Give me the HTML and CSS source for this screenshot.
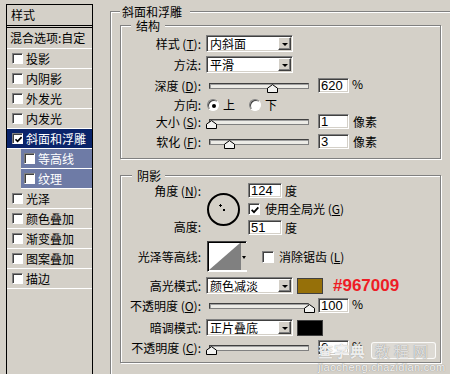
FILE: index.html
```html
<!DOCTYPE html>
<html lang="zh-CN">
<head>
<meta charset="utf-8">
<title>图层样式 - 斜面和浮雕</title>
<link rel="stylesheet" href="styles.css">
</head>
<body>
<div class="dialog">
  <div class="styles-list">
    <div class="sl-head">样式</div>
    <div class="sl-blend">混合选项:自定</div>
    <div class="sl-item"><span class="cb"></span>投影</div>
    <div class="sl-item"><span class="cb"></span>内阴影</div>
    <div class="sl-item"><span class="cb"></span>外发光</div>
    <div class="sl-item"><span class="cb"></span>内发光</div>
    <div class="sl-item selected"><span class="cb"><svg width="7" height="7" viewBox="0 0 7 7"><path d="M0.5 3.3 L2.6 5.4 L6.6 1.2" fill="none" stroke="#000" stroke-width="1.7"/></svg></span>斜面和浮雕</div>
    <div class="sl-item sub"><span class="cb"></span>等高线</div>
    <div class="sl-item sub"><span class="cb"></span>纹理</div>
    <div class="sl-item"><span class="cb"></span>光泽</div>
    <div class="sl-item"><span class="cb"></span>颜色叠加</div>
    <div class="sl-item"><span class="cb"></span>渐变叠加</div>
    <div class="sl-item"><span class="cb"></span>图案叠加</div>
    <div class="sl-item"><span class="cb"></span>描边</div>
  </div>

  <fieldset class="group outer">
    <legend class="lg-outer">斜面和浮雕</legend>

    <fieldset class="group inner struct">
      <legend class="lg-struct">结构</legend>
      <div class="row h17 mt2">
        <label class="lbl">样式 (<u>T</u>):</label>
        <div class="select"><span class="sel-text">内斜面</span><span class="sel-btn"><i class="arrow"></i></span></div>
      </div>
      <div class="row h17 mt4">
        <label class="lbl">方法:</label>
        <div class="select"><span class="sel-text">平滑</span><span class="sel-btn"><i class="arrow"></i></span></div>
      </div>
      <div class="row h15 mt5">
        <label class="lbl">深度 (<u>D</u>):</label>
        <div class="slider"><div class="track"></div><svg class="thumb" style="left:61px" width="11" height="9" viewBox="0 0 11 9"><path d="M0.5 8.5 V4.2 L5.5 0.6 L10.5 4.2 V8.5 Z" fill="#f2f2f0" stroke="#000"/></svg></div>
        <span class="num">620</span><span class="unit pct">%</span>
      </div>
      <div class="row h14 mt5">
        <label class="lbl">方向:</label>
        <span class="radio on"></span><span class="r-txt">上</span>
        <span class="radio second"></span><span class="r-txt">下</span>
      </div>
      <div class="row h15 mt2">
        <label class="lbl">大小 (<u>S</u>):</label>
        <div class="slider"><div class="track"></div><svg class="thumb" style="left:0px" width="11" height="9" viewBox="0 0 11 9"><path d="M0.5 8.5 V4.2 L5.5 0.6 L10.5 4.2 V8.5 Z" fill="#f2f2f0" stroke="#000"/></svg></div>
        <span class="num">1</span><span class="unit">像素</span>
      </div>
      <div class="row h15 mt5">
        <label class="lbl">软化 (<u>F</u>):</label>
        <div class="slider"><div class="track"></div><svg class="thumb" style="left:18px" width="11" height="9" viewBox="0 0 11 9"><path d="M0.5 8.5 V4.2 L5.5 0.6 L10.5 4.2 V8.5 Z" fill="#f2f2f0" stroke="#000"/></svg></div>
        <span class="num">3</span><span class="unit">像素</span>
      </div>
    </fieldset>

    <fieldset class="group inner shadow">
      <legend class="lg-shadow">阴影</legend>
      <div class="angle">
        <label class="lbl a-l1">角度 (<u>N</u>):</label>
        <div class="dial">
          <svg width="33" height="33" viewBox="0 0 33 33">
            <circle cx="16.5" cy="16.5" r="15.5" fill="none" stroke="#000" stroke-width="2"/>
            <path d="M13.5 11 V14 M12 12.5 H15" stroke="#000" stroke-width="1"/>
            <rect x="16" y="16" width="2" height="2" fill="#000"/>
          </svg>
        </div>
        <div class="a-r1"><span class="num wide">124</span><span class="unit deg">度</span></div>
        <div class="a-r2"><span class="cb big"><svg width="8" height="8" viewBox="0 0 8 8"><path d="M0.6 3.8 L3 6.2 L7.4 1.4" fill="none" stroke="#000" stroke-width="1.8"/></svg></span><span class="cb-txt">使用全局光 (<u>G</u>)</span></div>
        <label class="lbl a-l3">高度:</label>
        <div class="a-r3"><span class="num wide">51</span><span class="unit deg">度</span></div>
      </div>

      <div class="row h31 mt6">
        <label class="lbl">光泽等高线:</label>
        <div class="contour">
          <svg class="c-prev" width="31" height="27" viewBox="0 0 31 27"><rect width="31" height="27" fill="#fff"/><polygon points="0,27 31,0 31,27" fill="#808080"/></svg>
          <span class="c-btn"><i class="arrow"></i></span>
        </div>
        <span class="cb big aa"></span><span class="cb-txt">消除锯齿 (<u>L</u>)</span>
      </div>

      <div class="row h17 mt5">
        <label class="lbl">高光模式:</label>
        <div class="select"><span class="sel-text">颜色减淡</span><span class="sel-btn"><i class="arrow"></i></span></div>
        <span class="swatch gold"></span>
        <span class="hex">#967009</span>
      </div>
      <div class="row h15 mt4">
        <label class="lbl">不透明度 (<u>O</u>):</label>
        <div class="slider"><div class="track"></div><svg class="thumb" style="left:98px" width="11" height="9" viewBox="0 0 11 9"><path d="M0.5 8.5 V4.2 L5.5 0.6 L10.5 4.2 V8.5 Z" fill="#f2f2f0" stroke="#000"/></svg></div>
        <span class="num">100</span><span class="unit pct">%</span>
      </div>
      <div class="row h17 mt6">
        <label class="lbl">暗调模式:</label>
        <div class="select"><span class="sel-text">正片叠底</span><span class="sel-btn"><i class="arrow"></i></span></div>
        <span class="swatch black"></span>
      </div>
      <div class="row h15 mt4">
        <label class="lbl">不透明度 (<u>C</u>):</label>
        <div class="slider"><div class="track"></div><svg class="thumb" style="left:0px" width="11" height="9" viewBox="0 0 11 9"><path d="M0.5 8.5 V4.2 L5.5 0.6 L10.5 4.2 V8.5 Z" fill="#f2f2f0" stroke="#000"/></svg></div>
        <span class="num">0</span><span class="unit pct">%</span>
      </div>
    </fieldset>
  </fieldset>

  <div class="watermark">
    <div class="wm-top"><span class="wm-logo">查字典</span><span class="wm-box">教程网</span></div>
    <div class="wm-url">jiaocheng.chazidian.com</div>
  </div>
</div>
</body>
</html>
```

FILE: styles.css
```css
* { box-sizing: border-box; }
html, body { margin: 0; padding: 0; }
body {
  width: 450px;
  height: 374px;
  overflow: hidden;
  background: #d4d0c8;
  color: #000;
  font: 12px/14px "Noto Sans CJK SC", "Liberation Sans", sans-serif;
}
u { text-decoration: underline; text-underline-offset: 1px; }

.dialog {
  position: relative;
  display: flex;
  align-items: flex-start;
  height: 374px;
}

/* ---------- left styles list ---------- */
.styles-list {
  flex: none;
  margin: 4px 0 0 6px;
  width: 87px;
  height: 390px;
  border: 1px solid #000;
}
.sl-head {
  height: 23px;
  line-height: 20px;
  padding-left: 4px;
  border-bottom: 3px double #000;
}
.sl-blend {
  height: 21px;
  line-height: 20px;
  padding-left: 3px;
  border-bottom: 1px solid #fff;
}
.sl-item {
  height: 20px;
  display: flex;
  align-items: center;
  gap: 3px;
  padding-left: 5px;
  border-bottom: 1px solid #fff;
  white-space: nowrap;
}
.sl-item.selected {
  background: #0a246a;
  color: #fff;
}
.sl-item.sub {
  margin-left: 14px;
  padding-left: 3px;
  background: #6e7ba6;
  color: #fff;
}

.cb {
  flex: none;
  width: 11px;
  height: 11px;
  background: #fff;
  border: 1px solid;
  border-color: #808080 #fff #fff #808080;
  box-shadow: inset 1px 1px 0 #404040;
  display: flex;
  align-items: center;
  justify-content: center;
}
.cb svg { margin: 1px 0 0 1px; }
.cb.big { width: 12px; height: 12px; }

/* ---------- group boxes ---------- */
fieldset.group {
  margin: 0;
  padding: 0;
  min-width: 0;
  border: 1px solid #808080;
  box-shadow: inset 1px 1px 0 #fff, 1px 1px 0 #fff;
}
fieldset.group > legend {
  height: 15px;
  line-height: 15px;
  background: #d4d0c8;
}
.outer {
  flex: none;
  margin: 5px 0 0 17px !important;
  width: 348px;
  padding-bottom: 30px !important;
}
fieldset.group > legend.lg-outer {
  height: 13px;
  line-height: 13px;
  margin-left: 9px;
  padding: 0 8px 0 2px;
}
.inner { margin-left: 9px !important; width: 321px; }
.struct { margin-top: 0 !important; padding-bottom: 9px !important; }
.lg-struct { margin-left: 10px; padding: 0 5px; }
.shadow { margin-top: 9px !important; padding-bottom: 7px !important; }
.lg-shadow { margin-left: 11px; padding: 0 4px 0 5px; }

/* ---------- rows ---------- */
.row { display: flex; align-items: center; }
.h14 { height: 14px; }
.h15 { height: 15px; }
.h17 { height: 17px; }
.h31 { height: 31px; }
.mt2 { margin-top: 2px; }
.mt4 { margin-top: 4px; }
.mt5 { margin-top: 5px; }
.mt6 { margin-top: 6px; }

.lbl {
  flex: none;
  width: 80px;
  margin-right: 5px;
  text-align: right;
  white-space: nowrap;
}

/* dropdown */
.select {
  flex: none;
  width: 87px;
  height: 17px;
  display: flex;
  background: #fff;
  border: 1px solid;
  border-color: #808080 #fff #fff #808080;
  box-shadow: inset 1px 1px 0 #404040, inset -1px -1px 0 #d4d0c8;
  padding: 1px;
}
.sel-text {
  flex: 1;
  padding-left: 2px;
  line-height: 13px;
  white-space: nowrap;
}
.sel-btn {
  flex: none;
  width: 13px;
  height: 13px;
  background: #d4d0c8;
  border: 1px solid;
  border-color: #fff #404040 #404040 #fff;
  box-shadow: inset -1px -1px 0 #808080;
  display: flex;
  align-items: center;
  justify-content: center;
}
.arrow {
  display: block;
  width: 0;
  height: 0;
  border-left: 3px solid transparent;
  border-right: 3px solid transparent;
  border-top: 3px solid #000;
  margin-top: 1px;
}

/* slider */
.slider {
  flex: none;
  position: relative;
  width: 105px;
  height: 15px;
}
.track {
  width: 100px;
  height: 6px;
  margin: 5px 0 0 3px;
  background: #ecebe6;
  border: 1px solid;
  border-color: #404040 #808080 #808080 #404040;
  box-shadow: inset 1px 1px 0 #a0a0a0;
}
.thumb {
  position: absolute;
  top: 6px;
  display: block;
}

/* number inputs */
.num {
  flex: none;
  width: 31px;
  height: 15px;
  margin-left: 7px;
  padding-left: 2px;
  background: #fff;
  border: 1px solid;
  border-color: #808080 #fff #fff #808080;
  box-shadow: inset 1px 1px 0 #404040, inset -1px -1px 0 #d4d0c8;
  font: 13px/13px "Liberation Sans", sans-serif;
  display: flex;
  align-items: center;
}
.num.wide { width: 34px; margin-left: 0; }
.unit { margin-left: 4px; white-space: nowrap; }
.unit.pct { margin-left: 3px; align-self: flex-start; line-height: 12px; }
.unit.deg { margin-left: 3px; }

/* radios */
.radio {
  flex: none;
  width: 12px;
  height: 12px;
  margin-left: 1px;
  border-radius: 50%;
  background: #fff;
  border: 1px solid;
  border-color: #808080 #fff #fff #808080;
  box-shadow: inset 1px 1px 0 #404040;
  display: flex;
  align-items: center;
  justify-content: center;
}
.radio.on::after {
  content: "";
  width: 4px;
  height: 4px;
  border-radius: 50%;
  background: #000;
  margin: 1px 0 0 1px;
}
.radio.second { margin-left: 14px; }
.r-txt { margin-left: 4px; }

/* angle block */
.angle {
  display: grid;
  grid-template-columns: 85px 42px auto;
  grid-template-rows: 16px 20px 16px;
  align-items: center;
}
.angle .lbl { width: 85px; margin: 0; padding-right: 5px; }
.a-l1 { grid-column: 1; grid-row: 1; }
.a-l3 { grid-column: 1; grid-row: 3; }
.dial {
  grid-column: 2;
  grid-row: 1 / 4;
  align-self: center;
  margin-left: 1px;
  height: 33px;
}
.dial svg { display: block; }
.a-r1 { grid-column: 3; grid-row: 1; display: flex; align-items: center; align-self: start; }
.a-r2 { grid-column: 3; grid-row: 2; display: flex; align-items: center; }
.a-r3 { grid-column: 3; grid-row: 3; display: flex; align-items: center; align-self: end; }
.cb-txt { margin-left: 5px; white-space: nowrap; }

/* contour */
.contour {
  flex: none;
  margin-left: 1px;
  width: 40px;
  height: 31px;
  display: flex;
  border: 1px solid;
  border-color: #404040 #fff #fff #404040;
  box-shadow: inset 1px 1px 0 #000;
  padding: 1px 0 0 1px;
  background: #fff;
}
.c-prev { display: block; flex: none; }
.c-btn {
  flex: none;
  width: 7px;
  height: 27px;
  background: #d4d0c8;
  border-left: 1px solid #808080;
  display: flex;
  align-items: center;
  justify-content: center;
}
.c-btn .arrow { border-left-width: 2px; border-right-width: 2px; }
.cb.aa { margin-left: 15px; }

/* swatches */
.swatch {
  flex: none;
  width: 26px;
  height: 16px;
  margin-left: 4px;
  border: 1px solid #404040;
}
.swatch.gold { background: #967009; }
.swatch.black { background: #000; }
.hex {
  margin-left: 10px;
  font: bold 17px/17px "Liberation Sans", Arial, sans-serif;
  color: #ee1c25;
  white-space: nowrap;
}

/* watermark overlay */
.watermark {
  position: absolute;
  left: 318px;
  top: 341px;
  width: 122px;
  pointer-events: none;
}
.wm-top { display: flex; align-items: center; height: 19px; }
.wm-logo {
  font: bold 15px/18px "Noto Sans CJK SC", sans-serif;
  color: rgba(255, 255, 255, 0.85);
  text-shadow: 0 0 1px #8a8a8a;
  letter-spacing: 1px;
}
.wm-box {
  margin-left: 5px;
  padding: 0 3px;
  border: 1px solid rgba(255, 255, 255, 0.85);
  border-radius: 3px;
  background: rgba(255, 255, 255, 0.22);
  font: 15px/15px "Noto Sans CJK SC", sans-serif;
  color: rgba(235, 235, 235, 0.9);
  text-shadow: 0 0 1px #7a7a7a;
  letter-spacing: 4px;
}
.wm-url {
  margin-top: 2px;
  font: 11px/11px "Liberation Sans", sans-serif;
  color: rgba(255, 255, 255, 0.9);
  text-shadow: 0 0 1px #777;
  white-space: nowrap;
  letter-spacing: 0.3px;
}
```
